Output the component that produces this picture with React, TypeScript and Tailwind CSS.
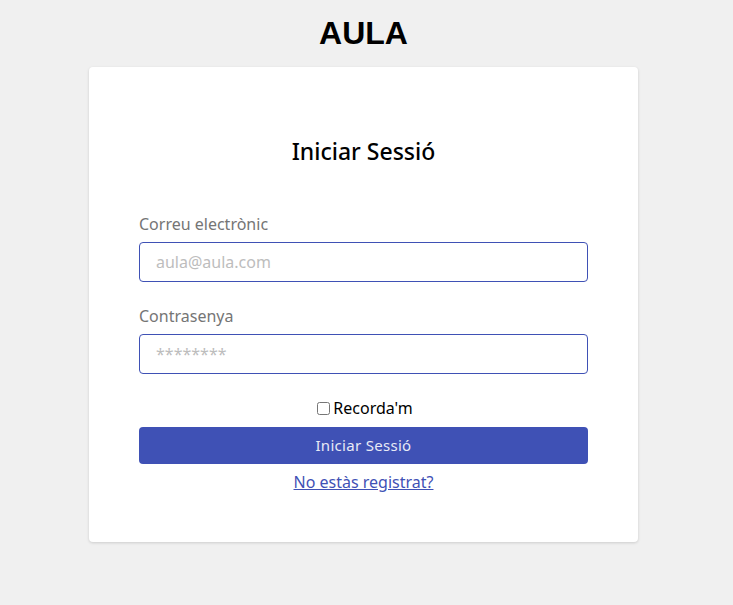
import React, { useState } from "react";

export default function App() {
  const [email, setEmail] = useState("");
  const [password, setPassword] = useState("");
  const [remember, setRemember] = useState(false);

  return (
    <div
      className="min-h-screen bg-[#f0f0f0] flex flex-col items-center pr-[6px]"
      style={{ fontFamily: '"Noto Sans", sans-serif' }}
    >
      <h1
        className="text-[32px] leading-[36px] font-bold text-black mt-[15px] mb-[16px]"
        style={{ fontFamily: '"Liberation Sans", Arial, sans-serif' }}
      >
        AULA
      </h1>

      <div className="w-[549px] bg-white rounded-[4px] shadow-[0_1px_3px_rgba(0,0,0,0.15)] px-[50px] pt-[69px] pb-[48px]">
        <h2 className="text-[23px] leading-[30px] font-medium text-black text-center mb-[46px]">
          Iniciar Sessió
        </h2>

        {/* Email */}
        <label className="block text-[16px] leading-[24px] text-[#757575] mb-[6px]">
          Correu electrònic
        </label>
        <input
          type="email"
          value={email}
          onChange={(e) => setEmail(e.target.value)}
          placeholder="aula@aula.com"
          className="w-full h-[40px] px-4 border border-[#3f51b5] rounded-[4px] text-[16px] text-gray-700 placeholder-[#bdbdbd] focus:outline-none bg-white"
        />

        {/* Password */}
        <label className="block text-[16px] leading-[24px] text-[#757575] mt-[22px] mb-[6px]">
          Contrasenya
        </label>
        <input
          type="password"
          value={password}
          onChange={(e) => setPassword(e.target.value)}
          placeholder="********"
          className="w-full h-[40px] px-4 border border-[#3f51b5] rounded-[4px] text-[16px] text-gray-700 placeholder-[#bdbdbd] focus:outline-none bg-white"
        />

        <div className="flex items-center justify-center mt-[22px] h-[24px]">
          <input
            type="checkbox"
            checked={remember}
            onChange={(e) => setRemember(e.target.checked)}
            className="w-[13px] h-[13px] m-[3px]"
          />
          <span className="text-[16px] leading-[24px] text-black">Recorda'm</span>
        </div>

        <button className="w-full h-[37px] mt-[7px] bg-[#3f51b5] text-[#e8eaf6] text-[15px] tracking-[0.3px] rounded-[4px]">
          Iniciar Sessió
        </button>

        <div className="text-center mt-[6px]">
          <a href="#" className="text-[16px] leading-[24px] text-[#3f51b5] underline">
            No estàs registrat?
          </a>
        </div>
      </div>
    </div>
  );
}
